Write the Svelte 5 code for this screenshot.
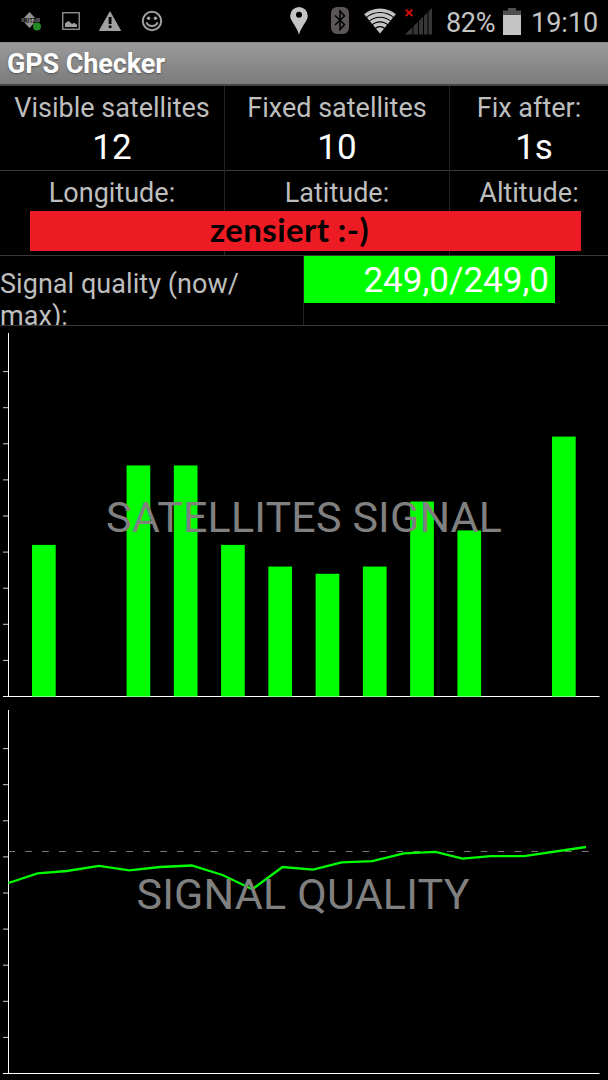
<script lang="ts">
  const axisX = 8.5;
  const baseY = 370.5;
  const unit = 7.22;
  const ticks = [1, 2, 3, 4, 5, 6, 7, 8, 9];

  const satellites = [21, 0, 32, 32, 21, 18, 17, 18, 27, 23, 0, 36];
  const history = [
    [8.5, 180], [37.5, 170.3], [67, 168], [99, 162.8], [129.3, 167.4],
    [160, 164], [191.7, 162.5], [222.5, 172], [252.3, 186.2], [282.5, 164],
    [313, 166.6], [341.7, 159.3], [372.3, 158.2], [404, 150.4], [435.5, 148.8],
    [462.5, 155.6], [490.7, 153.1], [524, 153.1], [586, 144]
  ];

  const points = history.map((p) => p.join(',')).join(' ');
</script>

{#snippet axes()}
  <g class="axes">
    <line x1={axisX} y1="7" x2={axisX} y2={baseY} />
    <line x1="3" y1={baseY} x2="599.5" y2={baseY} />
    {#each ticks as tick}
      <line class="tick" x1="3" y1={baseY - tick * 36.1} x2="8" y2={baseY - tick * 36.1} />
    {/each}
  </g>
{/snippet}

<div class="screen">
  <header class="status-bar">
    <div class="notifications">
      <svg width="22" height="20" viewBox="0 0 22 20">
        <path d="M9.500 1l7.500 8-7.500 8L2 9z" fill="#929292" />
        <path d="M1.500 9h4M14 9h6" stroke="#4a4a4a" stroke-width="4" />
        <text x="4" y="12" class="fritz" textLength="12" lengthAdjust="spacingAndGlyphs">RITZ</text>
        <circle cx="17" cy="15.500" r="4" fill="#258b25" />
      </svg>
      <svg width="18" height="18" viewBox="0 0 18 18">
        <rect x=".75" y=".75" width="16.5" height="16.5" fill="none" stroke="#999" stroke-width="1.3" />
        <path d="M3 15v-3.500l2.500-2 1.500-.3 3 2.800 2-1.200 3 2V15z" fill="#a0a0a0" />
      </svg>
      <svg width="22" height="20" viewBox="0 0 22 20">
        <path d="M11 .8L21.500 19.500H.5z" fill="#a0a0a0" stroke="#a0a0a0" stroke-linejoin="round" />
        <path d="M9.700 6h2.800v7H9.700zM9.700 14.500h2.800v2.600H9.700z" fill="#000" />
      </svg>
      <svg width="22" height="22" viewBox="0 0 22 22">
        <circle cx="11" cy="11" r="9.200" fill="none" stroke="#a0a0a0" stroke-width="2" />
        <circle cx="7.600" cy="8.300" r="1.800" fill="#a0a0a0" />
        <circle cx="14.400" cy="8.300" r="1.800" fill="#a0a0a0" />
        <path d="M5.500 12.200c1.500 5 9.500 5 11 0" fill="none" stroke="#a0a0a0" stroke-width="2" />
      </svg>
    </div>
    <div class="system">
      <svg class="pin" width="18" height="28" viewBox="0 0 18 28">
        <path fill-rule="evenodd" d="M9 0a8.800 8.800 0 0 0-8.800 8.800C.2 14 6.500 19 9 27.500 11.500 19 17.800 14 17.800 8.800A8.800 8.800 0 0 0 9 0zm0 4.800a3 3 0 1 1 0 6 3 3 0 0 1 0-6z" fill="#c4c4c4" />
      </svg>
      <svg class="bluetooth" width="18" height="28" viewBox="0 0 18 28">
        <rect width="18" height="27" rx="6" fill="#5a5556" />
        <path d="M4 8.500l9.500 9L9 22.500V4l4.500 5L4 18" fill="none" stroke="#000" stroke-width="1.500" />
      </svg>
      <svg class="wifi" width="34" height="26" viewBox="0 0 34 26">
        <clipPath id="fan"><path d="M17 25.500L-3 1V-4h40v5z" /></clipPath>
        <g clip-path="url(#fan)" fill="none" stroke="#c4c4c4" stroke-width="3.600">
          <circle cx="17" cy="25.500" r="6.200" fill="#c4c4c4" stroke="none" />
          <circle cx="17" cy="25.500" r="9.300" />
          <circle cx="17" cy="25.500" r="14" />
          <circle cx="17" cy="25.500" r="18.600" />
          <circle cx="17" cy="25.500" r="23.300" />
        </g>
      </svg>
      <svg class="signal" width="28" height="27" viewBox="0 0 28 27">
        <path d="M0 26.500L27 0v26.500z" fill="#383636" />
        <path d="M8 16v11M13.500 11v16M18.500 6v21M23 3v24" stroke="#000" stroke-width="1" />
        <path d="M.8 1.500l6.500 6.500M7.300 1.500L.8 8" stroke="#d40c0c" stroke-width="1.900" />
      </svg>
      <span class="percent">82%</span>
      <svg class="battery" width="18" height="27" viewBox="0 0 18 27">
        <path d="M5 0h8v2.500h5V8H0V2.500h5z" fill="#514e4e" />
        <rect y="7" width="18" height="20" fill="#c4c4c4" />
      </svg>
      <span class="clock">19:10</span>
    </div>
  </header>

  <h1 class="title">GPS Checker</h1>

  <section class="grid">
    <div class="cell">
      <span class="label">Visible satellites</span>
      <span class="value">12</span>
    </div>
    <div class="cell">
      <span class="label">Fixed satellites</span>
      <span class="value">10</span>
    </div>
    <div class="cell last">
      <span class="label">Fix after:</span>
      <span class="value time">1s</span>
    </div>
  </section>

  <section class="grid">
    <div class="cell"><span class="label">Longitude:</span></div>
    <div class="cell"><span class="label">Latitude:</span></div>
    <div class="cell last"><span class="label">Altitude:</span></div>
    <div class="censored">zensiert :-)</div>
  </section>

  <section class="quality">
    <div class="quality-label">Signal quality (now/<br />max):</div>
    <div class="quality-value">249,0/249,0</div>
  </section>

  <svg class="chart" width="608" height="377" viewBox="0 0 608 377">
    {@render axes()}
    {#each satellites as level, i}
      <rect x={32 + i * 47.27} y={baseY - level * unit} width="23.7" height={level * unit} fill="#0f0" />
    {/each}
    <text class="caption" x="106" y="205.500" textLength="396">SATELLITES SIGNAL</text>
  </svg>

  <svg class="chart" width="608" height="377" viewBox="0 0 608 377">
    {@render axes()}
    <line class="max" x1="8.300" y1="148.500" x2="589" y2="148.500" />
    <polyline class="history" {points} />
    <text class="caption" x="136.500" y="205.500" textLength="333">SIGNAL QUALITY</text>
  </svg>
</div>

<style>
  :global(body) {
    margin: 0;
    background: #000;
  }

  .screen {
    width: 608px;
    height: 1080px;
    overflow: hidden;
    background: #000;
    color: #bebebe;
    font-family: Roboto, sans-serif;
    font-size: 27px;
  }

  svg {
    display: block;
    flex: none;
  }

  .status-bar {
    display: flex;
    justify-content: space-between;
    height: 42px;
    box-sizing: border-box;
    padding: 0 9px 0 20px;
  }

  .notifications {
    display: flex;
    align-items: center;
    gap: 19.5px;
  }

  .fritz {
    font-size: 8px;
    font-weight: 700;
    fill: #111;
  }

  .system {
    display: flex;
    align-items: center;
    font-size: 27px;
    color: #c4c4c4;
  }

  .bluetooth {
    margin-left: 23px;
  }

  .wifi {
    margin-left: 14px;
  }

  .signal {
    margin-left: 8px;
  }

  .percent {
    width: 50px;
    margin-left: 13px;
    margin-top: 3px;
    letter-spacing: -0.3px;
  }

  .battery {
    margin-left: 7px;
  }

  .clock {
    width: 68px;
    margin-left: 10px;
    margin-top: 3px;
    white-space: nowrap;
  }

  .title {
    height: 44px;
    margin: 0;
    box-sizing: border-box;
    padding-left: 7px;
    border-top: 1px solid #8b8b8b;
    border-bottom: 2px solid #444;
    background: linear-gradient(#9a9a9a, #7b7b7b);
    color: #fff;
    font-size: 27px;
    font-weight: 700;
    line-height: 43px;
    letter-spacing: -0.1px;
    text-shadow: 0 1px 2px #555;
  }

  .grid {
    position: relative;
    display: grid;
    grid-template-columns: 225px 225px 158px;
    height: 85px;
    box-sizing: border-box;
    border-bottom: 1px solid #383838;
  }

  .cell {
    display: flex;
    flex-direction: column;
    align-items: center;
    border-right: 1px solid #242424;
  }

  .cell.last {
    border-right: 0;
  }

  .label {
    padding-top: 6px;
    line-height: 32px;
    white-space: nowrap;
  }

  .value {
    color: #fff;
    font-size: 35px;
    line-height: 48px;
  }

  .time {
    padding-left: 10px;
  }

  /* covers the coordinates */
  .censored {
    position: absolute;
    top: 40px;
    left: 30px;
    width: 551px;
    height: 40px;
    box-sizing: border-box;
    padding-left: 180px;
    background: #ed1c24;
    color: #000;
    font-family: Lato, sans-serif;
    font-size: 33px;
    font-weight: 700;
    line-height: 36px;
    letter-spacing: 0.4px;
  }

  .quality {
    display: grid;
    grid-template-columns: 304px 251px;
    height: 70px;
    box-sizing: border-box;
    border-bottom: 1px solid #383838;
  }

  .quality-label {
    overflow: hidden;
    box-sizing: border-box;
    height: 69px;
    padding-top: 12px;
    border-right: 1px solid #242424;
    line-height: 32px;
    letter-spacing: 0.05px;
    white-space: nowrap;
  }

  .quality-value {
    height: 47px;
    box-sizing: border-box;
    padding-right: 6px;
    background: #0f0;
    color: #fff;
    font-size: 35px;
    line-height: 50px;
    text-align: right;
  }

  .axes line {
    stroke: #fff;
    stroke-width: 1;
  }

  .axes .tick {
    stroke: #ccc;
  }

  .caption {
    fill: #808080;
    font-size: 43px;
  }

  .max {
    stroke: #777;
    stroke-width: 1;
    stroke-dasharray: 6.8 10.07;
  }

  .history {
    fill: none;
    stroke: #0f0;
    stroke-width: 2.3;
  }
</style>
